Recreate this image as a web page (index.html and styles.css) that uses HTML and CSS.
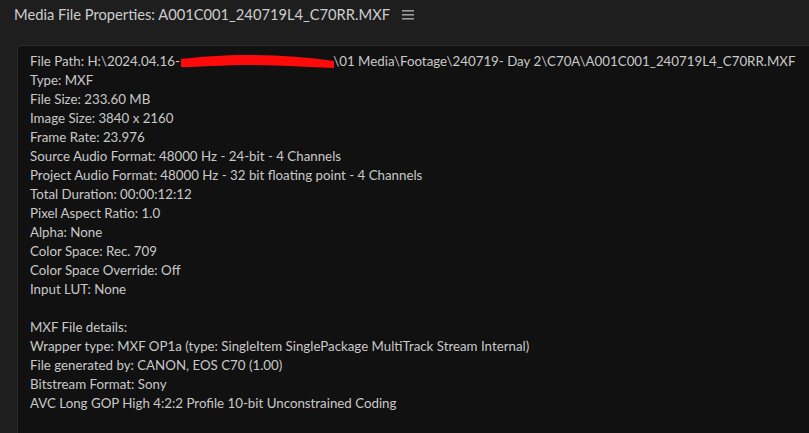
FILE: index.html
```html
<!DOCTYPE html>
<html lang="en">
<head>
  <meta charset="UTF-8" />
  <title>Media File Properties</title>
  <link rel="stylesheet" href="styles.css">
</head>
<body>
  <header class="panel-header">
    <span class="panel-title">Media File Properties: A001C001_240719L4_C70RR.MXF</span>
    <svg class="panel-menu" width="12" height="10" viewBox="0 0 12 10">
      <rect x="0" y="0" width="12" height="1.6" fill="#9a9a9a" />
      <rect x="0" y="4" width="12" height="1.6" fill="#9a9a9a" />
      <rect x="0" y="8" width="12" height="1.6" fill="#9a9a9a" />
    </svg>
  </header>

  <section class="props">
    <p>File Path: H:\2024.04.16- <span class="redact"><svg width="154" height="19" viewBox="0 0 154 19"><path d="M0 6 C20 4, 40 2, 68 2 C98 2, 126 4, 153 8 L153 15 C126 14, 98 12, 68 12 C45 12, 20 14, 0 14 Z" fill="#ff0a0a" /></svg></span>\01 Media\Footage\240719- Day 2\C70A\A001C001_240719L4_C70RR.MXF</p>
    <p>Type: MXF</p>
    <p>File Size: 233.60 MB</p>
    <p>Image Size: 3840 x 2160</p>
    <p>Frame Rate: 23.976</p>
    <p>Source Audio Format: 48000 Hz - 24-bit - 4 Channels</p>
    <p>Project Audio Format: 48000 Hz - 32 bit floating point - 4 Channels</p>
    <p>Total Duration: 00:00:12:12</p>
    <p>Pixel Aspect Ratio: 1.0</p>
    <p>Alpha: None</p>
    <p>Color Space: Rec. 709</p>
    <p>Color Space Override: Off</p>
    <p>Input LUT: None</p>
    <p>&nbsp;</p>
    <p>MXF File details:</p>
    <p>Wrapper type: MXF OP1a (type: SingleItem SinglePackage MultiTrack Stream Internal)</p>
    <p>File generated by: CANON, EOS C70 (1.00)</p>
    <p>Bitstream Format: Sony</p>
    <p>AVC Long GOP High 4:2:2 Profile 10-bit Unconstrained Coding</p>
  </section>
</body>
</html>
```

FILE: styles.css
```css
body {
  margin: 0;
  padding: 0;
  height: 100vh;
  display: flex;
  flex-direction: column;
  background-color: #1e1e1e;
  color: #c9c9c9;
  font-family: 'Lato', 'Open Sans', sans-serif;
  overflow: hidden;
}
.panel-header {
  display: flex;
  align-items: center;
  gap: 12px;
  height: 28px;
  padding-left: 14px;
}
.panel-title {
  font-size: 14.7px;
  color: #cdcdcd;
}
.panel-menu {
  margin-top: 1px;
}
.props {
  flex: 1;
  margin: 17px 0 0 17px;
  padding: 6px 12px;
  background-color: #111111;
  border-top: 1px solid #2b2b2b;
  border-left: 1px solid #2b2b2b;
  border-top-left-radius: 4px;
  font-size: 13.3px;
}
.props p {
  margin: 0;
  height: 19px;
  line-height: 19px;
  white-space: nowrap;
}
.redact {
  display: inline-block;
  width: 150px;
  height: 19px;
  vertical-align: top;
}
.redact svg {
  margin-top: 1px;
  margin-left: -2px;
}
```
